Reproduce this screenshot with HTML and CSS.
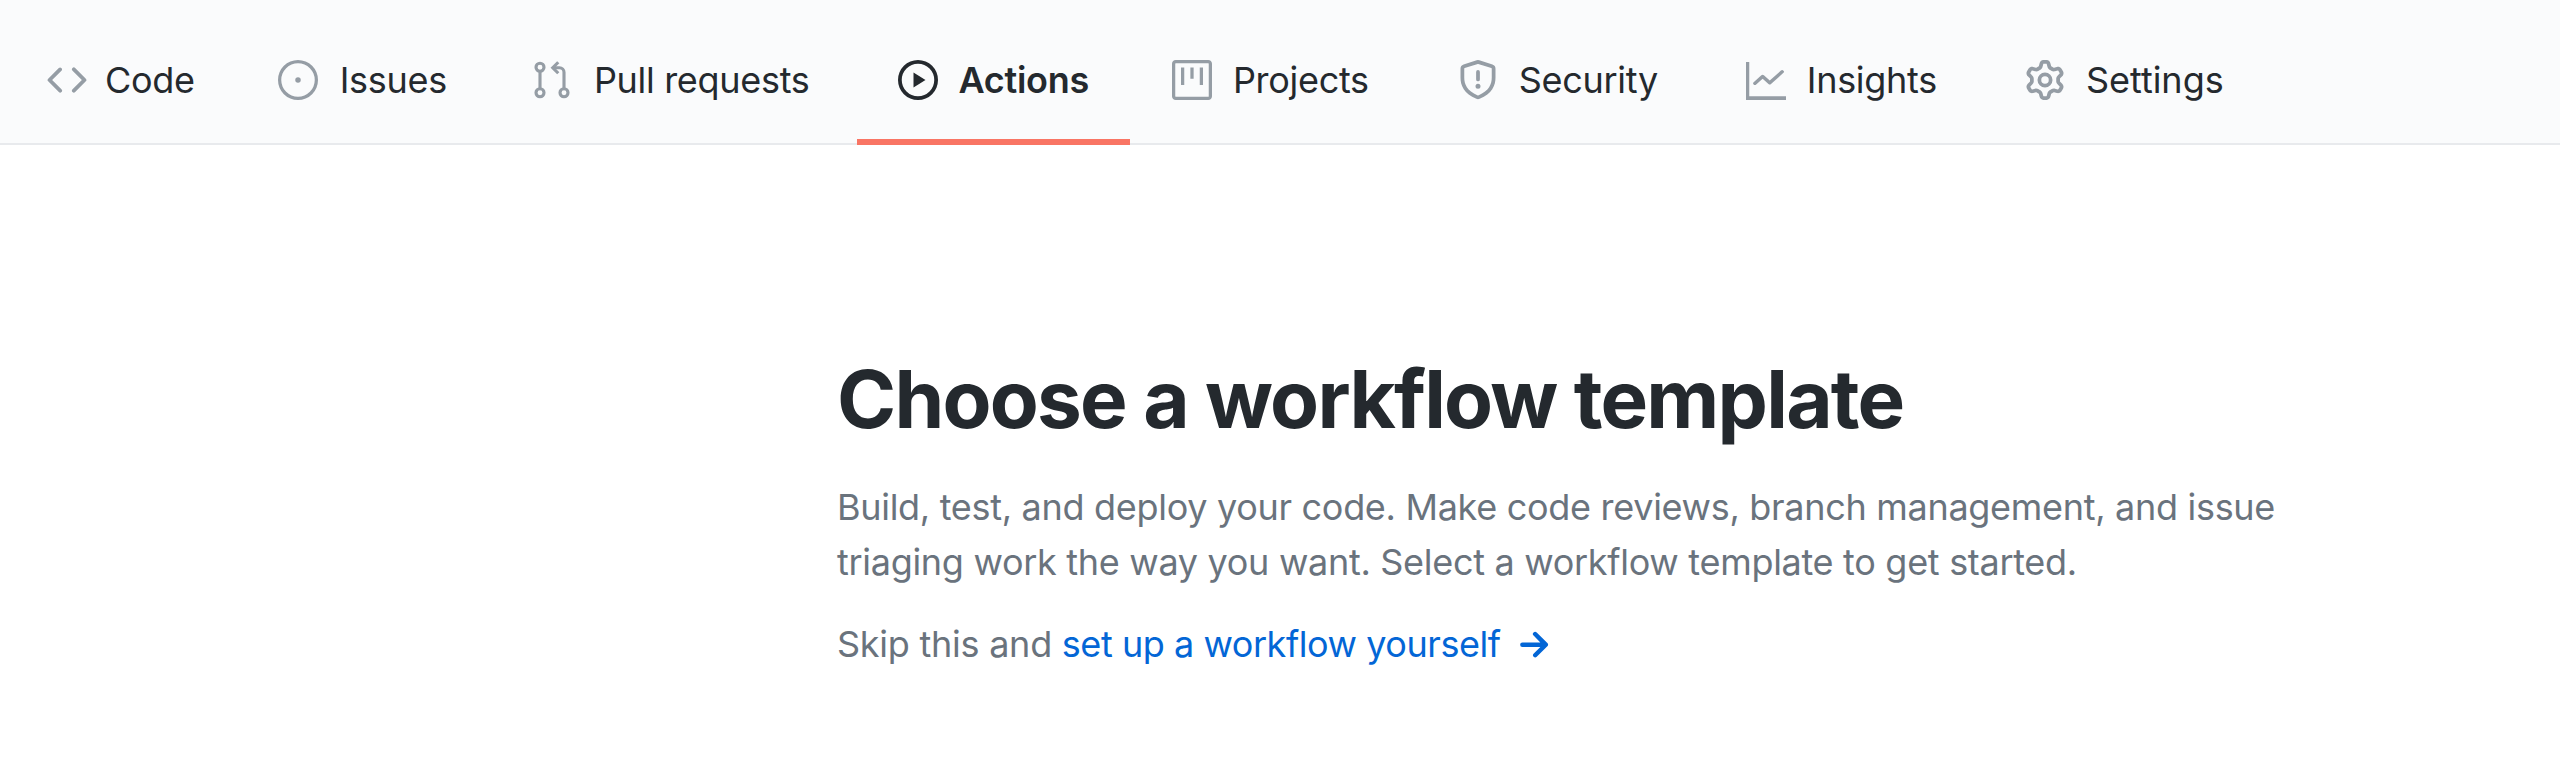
FILE: index.html
```html
<!DOCTYPE html>
<html lang="en">
<head>
<meta charset="utf-8">
<title>Choose a workflow template</title>
<link rel="stylesheet" href="styles.css">
</head>
<body>
<nav class="tabs">
  <a class="tab tab-code" href="#">
    <svg class="icon" viewBox="0 0 16 16"><path d="M4.72 3.22a.75.75 0 011.06 1.06L2.06 8l3.72 3.72a.75.75 0 11-1.06 1.06L.47 8.53a.75.75 0 010-1.06l4.25-4.25zm6.56 0a.75.75 0 10-1.06 1.06L13.94 8l-3.72 3.72a.75.75 0 101.06 1.06l4.25-4.25a.75.75 0 000-1.06l-4.25-4.25z"/></svg>
    <span>Code</span>
  </a>
  <a class="tab tab-issues" href="#">
    <svg class="icon" viewBox="0 0 16 16"><path d="M8 1.3a6.7 6.7 0 100 13.4A6.7 6.7 0 008 1.300zM0 8a8 8 0 1116 0A8 8 0 010 8z"/><circle cx="8" cy="8" r="1.100"/></svg>
    <span>Issues</span>
  </a>
  <a class="tab tab-pulls" href="#">
    <svg class="icon" viewBox="0 0 16 16"><g class="line"><circle cx="3.2" cy="2.9" r="1.6"/><circle cx="3.2" cy="13.1" r="1.6"/><path d="M3.2 4.5v7"/><circle cx="12.8" cy="13.1" r="1.6"/><path d="M12.8 11.500V4.900a1.800 1.800 0 00-1.800-1.800H8.700"/><path d="M10.500 .9L8.300 3.100l2.200 2.200"/></g></svg>
    <span>Pull requests</span>
  </a>
  <a class="tab tab-actions active" href="#">
    <svg class="icon" viewBox="0 0 16 16"><path d="M8 1.500a6.500 6.500 0 100 13 6.500 6.500 0 000-13zM0 8a8 8 0 1116 0A8 8 0 010 8z"/><path d="M6.200 5v6l4.800-3z"/></svg>
    <span>Actions</span>
  </a>
  <a class="tab tab-projects" href="#">
    <svg class="icon" viewBox="0 0 16 16"><path d="M1.500 0h13C15.330 0 16 .67 16 1.500v13c0 .83-.67 1.500-1.500 1.500h-13C.67 16 0 15.330 0 14.500v-13C0 .67.67 0 1.500 0zm0 1.300a.2.200 0 00-.2.200v13c0 .11.09.2.2.2h13a.2.200 0 00.2-.2v-13a.2.200 0 00-.2-.2h-13z"/><path d="M3.600 3h1.300v7H3.600zM7.350 3h1.300v4.500H7.350zM11.100 3h1.300v7h-1.300z"/></svg>
    <span>Projects</span>
  </a>
  <a class="tab tab-security" href="#">
    <svg class="icon" viewBox="0 0 16 16"><path d="M7.467.133a1.750 1.750 0 011.066 0l5.250 1.680A1.750 1.750 0 0115 3.480V7c0 1.566-.32 3.182-1.303 4.682-.983 1.498-2.585 2.813-5.032 3.855a1.700 1.700 0 01-1.330 0c-2.447-1.042-4.049-2.357-5.032-3.855C1.320 10.182 1 8.566 1 7V3.480a1.750 1.750 0 011.217-1.667l5.250-1.680zm.610 1.429a.25.25 0 00-.153 0l-5.250 1.680a.25.25 0 00-.174.238V7c0 1.358.275 2.666 1.057 3.860.784 1.194 2.121 2.340 4.366 3.297a.2.200 0 00.154 0c2.245-.956 3.582-2.104 4.366-3.298C13.225 9.666 13.500 8.360 13.500 7V3.480a.25.25 0 00-.174-.237l-5.250-1.680zM9 10.500a1 1 0 11-2 0 1 1 0 012 0zm-.25-5.750a.75.75 0 10-1.500 0v3a.75.75 0 001.500 0v-3z"/></svg>
    <span>Security</span>
  </a>
  <a class="tab tab-insights" href="#">
    <svg class="icon" viewBox="0 0 16 16"><path d="M1.300 .8H0V16h16v-1.500H1.300z"/><path d="M15.780 4.280a.75.75 0 00-1.060-1.060L10 7.940 7.530 5.470a.75.75 0 00-1.060 0L3.220 8.720a.75.75 0 001.060 1.060L7 7.060l2.470 2.470a.75.75 0 001.060 0l5.250-5.250z" transform="translate(0 1.500) scale(.95 .85)"/></svg>
    <span>Insights</span>
  </a>
  <a class="tab tab-settings" href="#">
    <svg class="icon" viewBox="0 0 16 16"><path d="M8 0a8.200 8.200 0 0 1 .701.031C9.444.095 9.990.645 10.160 1.290l.288 1.107c.018.066.079.158.212.224.231.114.454.243.668.386.123.082.233.09.299.071l1.103-.303c.644-.176 1.392.021 1.820.63.27.385.506.792.704 1.218.315.675.111 1.422-.364 1.891l-.814.806c-.049.048-.098.147-.088.294.016.257.016.515 0 .772-.01.147.038.246.088.294l.814.806c.475.469.679 1.216.364 1.891a7.977 7.977 0 0 1-.704 1.217c-.428.61-1.176.807-1.820.63l-1.102-.302c-.067-.019-.177-.011-.3.071a5.909 5.909 0 0 1-.668.386c-.133.066-.194.158-.211.224l-.29 1.106c-.168.646-.715 1.196-1.458 1.260a8.006 8.006 0 0 1-1.402 0c-.743-.064-1.289-.614-1.458-1.260l-.289-1.106c-.018-.066-.079-.158-.212-.224a5.738 5.738 0 0 1-.668-.386c-.123-.082-.233-.09-.299-.071l-1.103.303c-.644.176-1.392-.021-1.820-.63a8.120 8.120 0 0 1-.704-1.218c-.315-.675-.111-1.422.363-1.891l.815-.806c.05-.048.098-.147.088-.294a6.214 6.214 0 0 1 0-.772c.01-.147-.038-.246-.088-.294l-.815-.806C.635 6.045.431 5.298.746 4.623a7.920 7.920 0 0 1 .704-1.217c.428-.61 1.176-.807 1.820-.63l1.102.302c.067.019.177.011.3-.071.214-.143.437-.272.668-.386.133-.066.194-.158.211-.224l.29-1.106C6.009.645 6.556.095 7.299.03 7.530.01 7.764 0 8 0zm-.571 1.525c-.036.003-.108.036-.137.146l-.289 1.105c-.147.561-.549.967-.998 1.189-.173.086-.34.183-.5.29-.417.278-.97.423-1.529.27l-1.103-.303c-.109-.03-.175.016-.195.045-.22.312-.412.644-.573.99-.014.031-.021.11.059.19l.815.806c.411.406.562.957.53 1.456a4.709 4.709 0 0 0 0 .582c.032.499-.119 1.050-.53 1.456l-.815.806c-.081.08-.073.159-.059.19.162.346.353.677.573.989.02.03.085.076.195.046l1.102-.303c.56-.153 1.113-.008 1.530.27.161.107.328.204.501.29.447.222.85.629.997 1.189l.289 1.105c.029.109.101.143.137.146a6.600 6.600 0 0 0 1.142 0c.036-.003.108-.036.137-.146l.289-1.105c.147-.561.549-.967.998-1.189.173-.086.34-.183.5-.29.417-.278.97-.423 1.529-.27l1.103.303c.109.029.175-.016.195-.045.22-.313.411-.644.573-.99.014-.031.021-.11-.059-.19l-.815-.806c-.411-.406-.562-.957-.53-1.456a4.709 4.709 0 0 0 0-.582c-.032-.499.119-1.050.53-1.456l.815-.806c.081-.08.073-.159.059-.19a6.464 6.464 0 0 0-.573-.989c-.02-.03-.085-.076-.195-.046l-1.102.303c-.56.153-1.113.008-1.530-.27a4.440 4.440 0 0 0-.501-.29c-.447-.222-.85-.629-.997-1.189l-.289-1.105c-.029-.11-.101-.143-.137-.146a6.600 6.600 0 0 0-1.142 0zM11 8a3 3 0 1 1-6 0 3 3 0 0 1 6 0zM9.500 8a1.500 1.500 0 1 0-3.001.001A1.500 1.500 0 0 0 9.500 8z"/></svg>
    <span>Settings</span>
  </a>
</nav>
<main class="intro">
  <h1 class="title">Choose a workflow template</h1>
  <p class="lead">Build, test, and deploy your code. Make code reviews, branch management, and issue triaging work the way you want. Select a workflow template to get started.</p>
  <p class="skip">Skip this and <a class="link" href="#">set up a workflow yourself<svg class="arrow" viewBox="0 0 16 16"><path d="M8.220 2.970a.9.900 0 011.270 0l4.250 4.250a.9.900 0 010 1.270l-4.250 4.250a.9.900 0 01-1.270-1.270l2.720-2.720H3.750a.9.900 0 010-1.800h7.190L8.220 4.240a.9.900 0 010-1.270z"/></svg></a></p>
</main>
</body>
</html>
```
FILE: styles.css
```css
* { box-sizing: border-box; }
html, body { margin: 0; padding: 0; background: #fff; }
body { font-family: Inter, "Liberation Sans", sans-serif; color: #24292e; height: 767px; overflow: hidden; }
.tabs { display: flex; align-items: stretch; gap: 5px; height: 145px; padding-left: 6px; background: #fafbfc; border-bottom: 2px solid #e8eaed; }
.tab { display: flex; align-items: center; gap: 21px; padding: 21px 42px 0 41px; margin-bottom: -2px; color: #24292e; font-size: 36px; letter-spacing: -0.3px; text-decoration: none; border-bottom: 6px solid transparent; }
.tab-code { gap: 18px; padding-right: 37px; }
.tab-issues { gap: 22px; padding-right: 39px; }
.tab-pulls { gap: 22px; }
.tab-actions { padding-right: 41px; }
.tab-projects { margin-left: -4px; padding-right: 43px; }
.tab-security { padding-right: 42px; }
.tab-settings { letter-spacing: 0; }
.icon { width: 40px; height: 40px; flex: none; fill: #959da5; }
.line { fill: none; stroke: #959da5; stroke-width: 1.250; }
.active { font-weight: 600; border-bottom-color: #f97564; }
.active .icon { fill: #24292e; }
.intro { padding: 204px 0 0 837px; }
.title { margin: 0; font-size: 80px; line-height: 100px; font-weight: 700; letter-spacing: -1.77px; }
.lead { margin: 31px 0 0; width: 1500px; font-size: 36px; line-height: 55px; letter-spacing: -0.3px; color: #6a737d; }
.skip { margin: 27px 0 0; font-size: 36px; line-height: 55px; letter-spacing: -0.25px; color: #6a737d; }
.link { color: #0366d6; letter-spacing: -0.45px; text-decoration: none; }
.arrow { width: 40px; height: 40px; margin-left: 12px; vertical-align: -8px; fill: #0366d6; }
```
